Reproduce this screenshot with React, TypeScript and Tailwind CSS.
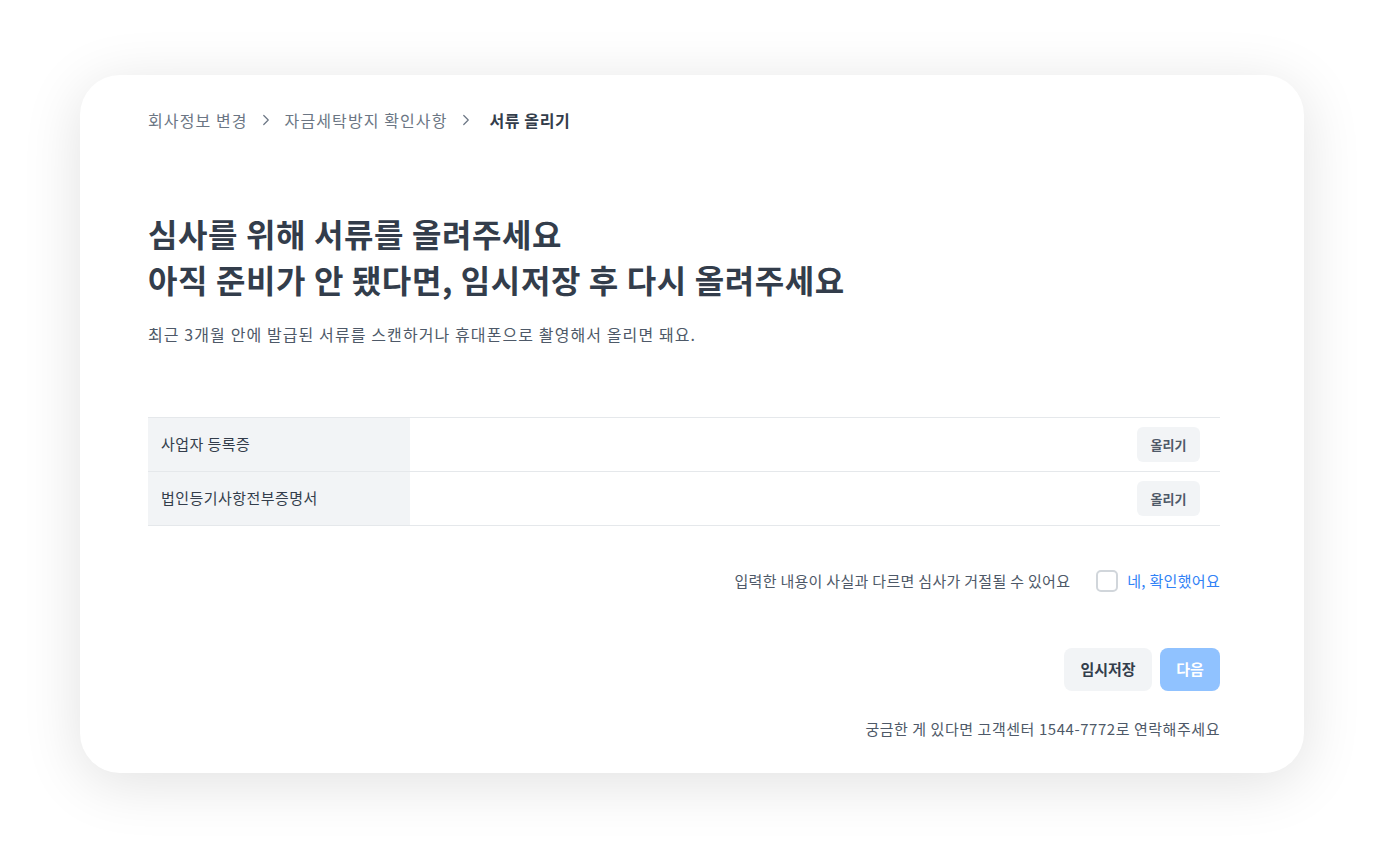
import { ChevronRight } from 'lucide-react';

const docs = ['사업자 등록증', '법인등기사항전부증명서'];

export default function App() {
  return (
    <div
      className="min-h-screen w-full bg-white pt-[75px] px-[80px]"
      style={{ fontFamily: '"Noto Sans CJK KR", "Noto Sans", sans-serif' }}
    >
      <div className="h-[698px] rounded-[40px] bg-white pl-[68px] pr-[84px] pt-[107px] shadow-[0_10px_60px_rgba(0,0,0,0.12)] flex flex-col relative">
        <nav className="absolute left-[68px] top-[33px] flex items-center text-[16px] tracking-[1.1px] text-[#6b7684]">
          <span>회사정보 변경</span>
          <ChevronRight className="w-[18px] h-[18px] ml-[9px] mr-[10px] text-[#6b7684]" strokeWidth={1.6} />
          <span>자금세탁방지 확인사항</span>
          <ChevronRight className="w-[18px] h-[18px] ml-[9px] mr-[15px] text-[#6b7684]" strokeWidth={1.6} />
          <span className="font-bold text-[#333d4b] tracking-[0.6px]">서류 올리기</span>
        </nav>

        <div className="mt-[28px]">
          <h1 className="text-[32px] leading-[46px] font-bold text-[#333d4b] tracking-[0.6px]">
            심사를 위해 서류를 올려주세요
            <br />
            아직 준비가 안 됐다면, 임시저장 후 다시 올려주세요
          </h1>
          <p className="mt-[20px] text-[16px] leading-[24px] tracking-[1.1px] text-[#4e5968]">
            최근 3개월 안에 발급된 서류를 스캔하거나 휴대폰으로 촬영해서 올리면 돼요.
          </p>
        </div>

        <div className="mt-[71px] border-t border-[#e5e8eb]">
          {docs.map((d) => (
            <div key={d} className="flex h-[54px] border-b border-[#e5e8eb]">
              <div className="w-[262px] bg-[#f2f4f6] flex items-center pl-[13px] text-[15px] tracking-[0.45px] text-[#333d4b]">
                {d}
              </div>
              <div className="flex-1 flex items-center justify-end pr-[20px]">
                <button className="h-[35px] w-[63px] rounded-[6px] bg-[#f2f4f6] text-[13px] font-bold text-[#4e5968]">
                  올리기
                </button>
              </div>
            </div>
          ))}
        </div>

        <div className="mt-[44px] flex items-center justify-end text-[15px]">
          <span className="text-[#4e5968] tracking-[0.3px]">입력한 내용이 사실과 다르면 심사가 거절될 수 있어요</span>
          <span className="ml-[26px] w-[22px] h-[22px] rounded-[5px] border-2 border-[#d1d6db] bg-white" />
          <span className="ml-[9px] text-[#3182f6] tracking-[0.3px]">네, 확인했어요</span>
        </div>

        <div className="mt-[55px] flex justify-end gap-[8px]">
          <button className="h-[43px] w-[88px] rounded-[8px] bg-[#f2f4f6] text-[15px] font-bold text-[#333d4b]">
            임시저장
          </button>
          <button className="h-[43px] w-[60px] rounded-[8px] bg-[#90c2ff] text-[15px] font-bold text-white">
            다음
          </button>
        </div>

        <p className="mt-[27px] text-right text-[15px] tracking-[0.55px] text-[#4e5968]">
          궁금한 게 있다면 고객센터 1544-7772로 연락해주세요
        </p>
      </div>
    </div>
  );
}
